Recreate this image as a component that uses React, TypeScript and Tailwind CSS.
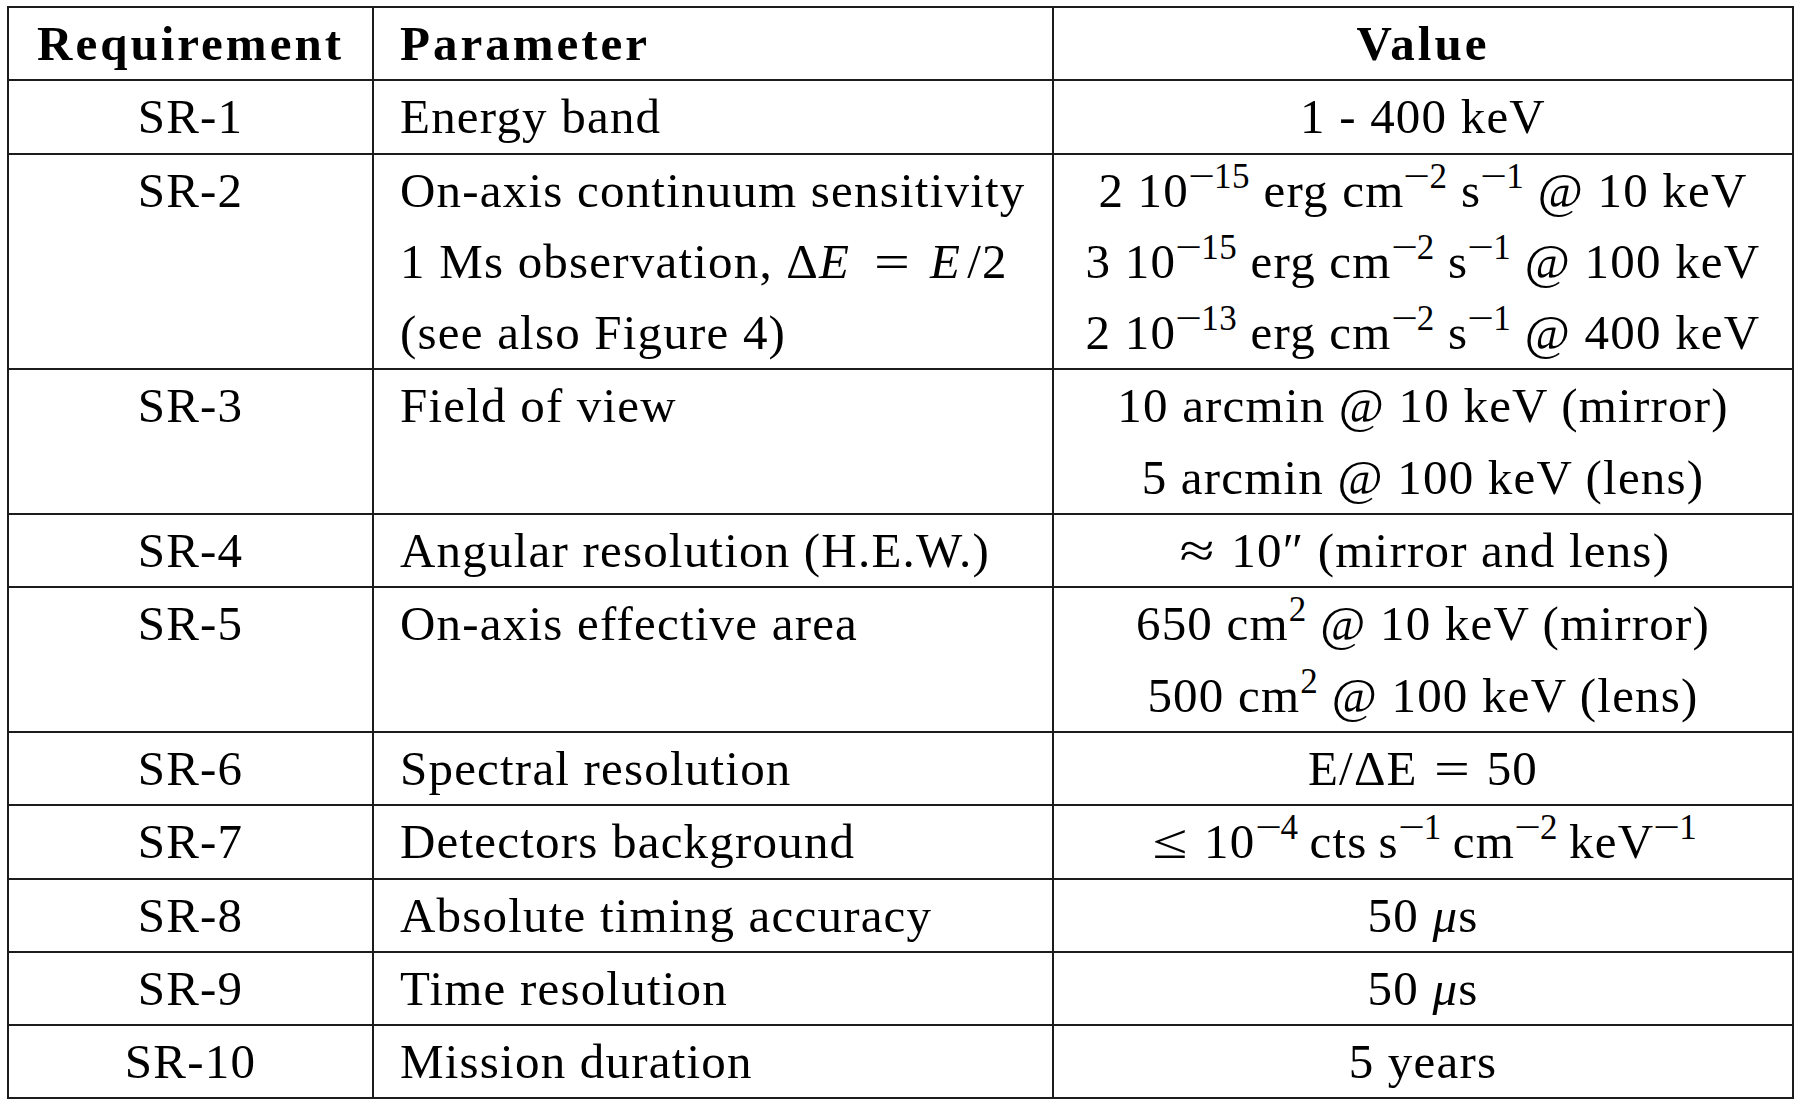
import type { ReactNode } from "react"

// superscript in a math-like style
function Sup({ children }: { children: ReactNode }) {
  return <sup className="relative -top-[19px] text-[35px] leading-none tracking-[0.5px]">{children}</sup>
}

// math minus is wider than the text one
const M = () => <span className="inline-block w-[25px] scale-x-[1.35] text-center tracking-normal">−</span>

// relation sign, drawn wider like the math font
function Rel({ children }: { children: ReactNode }) {
  return <span className="inline-block w-[42px] scale-x-[1.3] text-center tracking-normal">{children}</span>
}

const rows: { id: string; param: ReactNode[]; value: ReactNode[] }[] = [
  { id: "SR-1", param: ["Energy band"], value: ["1 - 400 keV"] },
  {
    id: "SR-2",
    param: [
      "On-axis continuum sensitivity",
      <>
        1 Ms observation, Δ<i className="pr-[3px]">E</i> <span className="mx-[4px] inline-block"><Rel>=</Rel></span>{" "}
        <i className="pr-[6px]">E</i>/2
      </>,
      "(see also Figure 4)",
    ],
    value: [
      <>
        2 10<Sup><M />15</Sup> erg cm<Sup><M />2</Sup> s<Sup><M />1</Sup> @ 10 keV
      </>,
      <>
        3 10<Sup><M />15</Sup> erg cm<Sup><M />2</Sup> s<Sup><M />1</Sup> @ 100 keV
      </>,
      <>
        2 10<Sup><M />13</Sup> erg cm<Sup><M />2</Sup> s<Sup><M />1</Sup> @ 400 keV
      </>,
    ],
  },
  { id: "SR-3", param: ["Field of view"], value: ["10 arcmin @ 10 keV (mirror)", "5 arcmin @ 100 keV (lens)"] },
  {
    id: "SR-4",
    param: ["Angular resolution (H.E.W.)"],
    value: [
      <>
        <Rel>≈</Rel> 10″ (mirror and lens)
      </>,
    ],
  },
  {
    id: "SR-5",
    param: ["On-axis effective area"],
    value: [
      <>
        650 cm<Sup>2</Sup> @ 10 keV (mirror)
      </>,
      <>
        500 cm<Sup>2</Sup> @ 100 keV (lens)
      </>,
    ],
  },
  {
    id: "SR-6",
    param: ["Spectral resolution"],
    value: [
      <>
        E/ΔE <Rel>=</Rel> 50
      </>,
    ],
  },
  {
    id: "SR-7",
    param: ["Detectors background"],
    value: [
      <>
        <Rel>≤</Rel> 10<Sup><M />4</Sup>&thinsp;cts&thinsp;s<Sup><M />1</Sup>&thinsp;cm<Sup><M />2</Sup>&thinsp;keV<Sup><M />1</Sup>
      </>,
    ],
  },
  {
    id: "SR-8",
    param: ["Absolute timing accuracy"],
    value: [
      <>
        50 <i>μ</i>s
      </>,
    ],
  },
  {
    id: "SR-9",
    param: ["Time resolution"],
    value: [
      <>
        50 <i>μ</i>s
      </>,
    ],
  },
  { id: "SR-10", param: ["Mission duration"], value: ["5 years"] },
]

export default function App() {
  return (
    <div className="min-h-screen bg-white pt-[6px] pl-[7px] font-['Liberation_Serif',serif] text-[49px] leading-[71.3px] tracking-[1.2px] text-black">
      <table className="table-fixed border-separate border-spacing-0 border-l-2 border-t-2 border-[#1c1c1c]">
        <colgroup>
          <col className="w-[365px]" />
          <col className="w-[680px]" />
          <col className="w-[740px]" />
        </colgroup>
        <thead>
          <tr className="font-bold tracking-[3px]">
            <th className="border-b-2 border-r-2 border-[#1c1c1c] p-0 text-center font-bold">Requirement</th>
            <th className="border-b-2 border-r-2 border-[#1c1c1c] py-0 pl-[26px] text-left font-bold">Parameter</th>
            <th className="border-b-2 border-r-2 border-[#1c1c1c] p-0 text-center font-bold">Value</th>
          </tr>
        </thead>
        <tbody>
          {rows.map((r) => (
            <tr key={r.id}>
              <td className="border-b-2 border-r-2 border-[#1c1c1c] p-0 text-center align-top">{r.id}</td>
              <td className="border-b-2 border-r-2 border-[#1c1c1c] py-0 pl-[26px] align-top whitespace-nowrap">
                {r.param.map((p, i) => (
                  <div key={i}>{p}</div>
                ))}
              </td>
              <td className="border-b-2 border-r-2 border-[#1c1c1c] p-0 text-center align-top whitespace-nowrap">
                {r.value.map((v, i) => (
                  <div key={i}>{v}</div>
                ))}
              </td>
            </tr>
          ))}
        </tbody>
      </table>
    </div>
  )
}
